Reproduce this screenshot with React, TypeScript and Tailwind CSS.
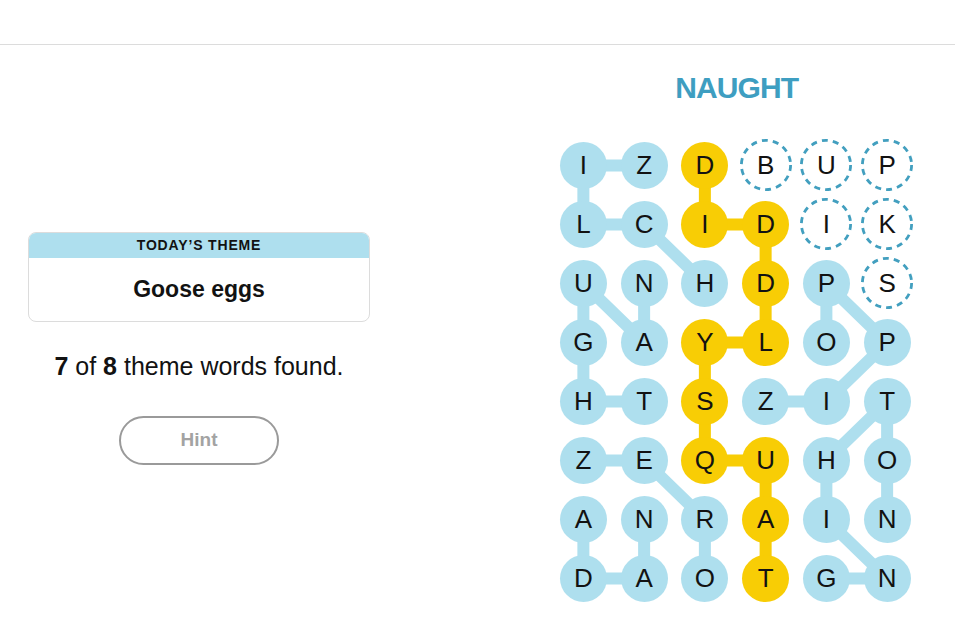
import React from 'react';

const CELL_W = 60.75;
const CELL_H = 59;

const rows = ['IZDBUP', 'LCIDIK', 'UNHDPS', 'GAYLOP', 'HTSZIT', 'ZEQUHO', 'ANRAIN', 'DAOTGN'];

// found theme words, as [row, col] paths
const themeWords: number[][][] = [
  [[0, 1], [0, 0], [1, 0], [1, 1], [2, 2]],
  [[2, 1], [3, 1], [2, 0], [3, 0], [4, 0], [4, 1]],
  [[4, 3], [4, 4], [3, 5], [2, 4], [3, 4]],
  [[6, 5], [5, 5], [4, 5], [5, 4], [6, 4], [7, 5], [7, 4]],
  [[5, 0], [5, 1], [6, 2], [7, 2]],
  [[6, 1], [7, 1], [7, 0], [6, 0]],
];

const spangram = [[0, 2], [1, 2], [1, 3], [2, 3], [3, 3], [3, 2], [4, 2], [5, 2], [5, 3], [6, 3], [7, 3]];

const BLUE = '#aedfee';
const YELLOW = '#f8cd05';

const center = (r: number, c: number) => [c * CELL_W + CELL_W / 2, r * CELL_H + CELL_H / 2];

const cellState = (r: number, c: number) => {
  if (spangram.some(([a, b]) => a === r && b === c)) return 'span';
  if (themeWords.some((w) => w.some(([a, b]) => a === r && b === c))) return 'theme';
  return 'open';
};

const Connectors = () => {
  const lines: { d: string; color: string }[] = [];
  const add = (path: number[][], color: string) => {
    const d = path
      .map(([r, c], i) => {
        const [x, y] = center(r, c);
        return `${i === 0 ? 'M' : 'L'}${x} ${y}`;
      })
      .join(' ');
    lines.push({ d, color });
  };
  themeWords.forEach((w) => add(w, BLUE));
  add(spangram, YELLOW);

  return (
    <svg className="absolute inset-0 pointer-events-none" width={CELL_W * 6} height={CELL_H * 8}>
      {lines.map((l, i) => (
        <path key={i} d={l.d} stroke={l.color} strokeWidth={12} fill="none" strokeLinejoin="round" />
      ))}
    </svg>
  );
};

const Board = () => (
  <div className="relative w-[364.5px] h-[472px]">
    <Connectors />
    <div className="relative grid grid-cols-[repeat(6,60.75px)] grid-rows-[repeat(8,59px)]">
      {rows.map((row, r) =>
        row.split('').map((ch, c) => {
          const state = cellState(r, c);
          return (
            <div key={`${r}-${c}`} className="flex items-center justify-center">
              {state === 'open' ? (
                <div className="relative w-[52px] h-[52px] flex items-center justify-center">
                  <svg className="absolute inset-0" width="52" height="52">
                    <circle cx="26" cy="26" r="24.6" fill="none" stroke="#429fbf" strokeWidth="2.8" strokeDasharray="6 5.1" />
                  </svg>
                  <span className="relative text-[26px] leading-none text-[#121212]">{ch}</span>
                </div>
              ) : (
                <div
                  className={`w-[47px] h-[47px] rounded-full flex items-center justify-center text-[26px] leading-none text-[#121212] ${
                    state === 'span' ? 'bg-[#f8cd05]' : 'bg-[#aedfee]'
                  }`}
                >
                  {ch}
                </div>
              )}
            </div>
          );
        })
      )}
    </div>
  </div>
);

export default function App() {
  return (
    <div className="w-[955px] h-[626px] bg-white overflow-hidden font-['Liberation_Sans',Arial,sans-serif] text-[#121212]">
      {/* top bar */}
      <div className="h-[45px] border-b border-[#dcdcdc]" />

      <div className="flex">
        {/* theme + progress */}
        <div className="w-[398px] flex flex-col items-center pt-[187px]">
          <div className="w-[342px] border border-[#dcdcdc] rounded-lg overflow-hidden">
            <div className="h-[25px] bg-[#aedfee] flex items-center justify-center text-[14px] font-bold tracking-[0.06em] uppercase">
              Today’s Theme
            </div>
            <div className="h-[63px] flex items-center justify-center text-[23px] font-bold">Goose eggs</div>
          </div>

          <p className="mt-[29px] text-[25px] leading-[30px]">
            <b>7</b> of <b>8</b> theme words found.
          </p>

          <button className="mt-[35px] w-[160px] h-[49px] rounded-full border-2 border-[#9a9a9a] text-[19px] font-bold text-[#a3a3a3]">
            Hint
          </button>
        </div>

        {/* board */}
        <div className="pl-[155px] pt-[25px] flex flex-col items-center">
          <h1 className="text-[30px] leading-[36px] font-bold tracking-[-0.03em] text-[#3e9ec1] pl-[3px]">NAUGHT</h1>
          <div className="mt-[29.5px]">
            <Board />
          </div>
        </div>
      </div>
    </div>
  );
}
